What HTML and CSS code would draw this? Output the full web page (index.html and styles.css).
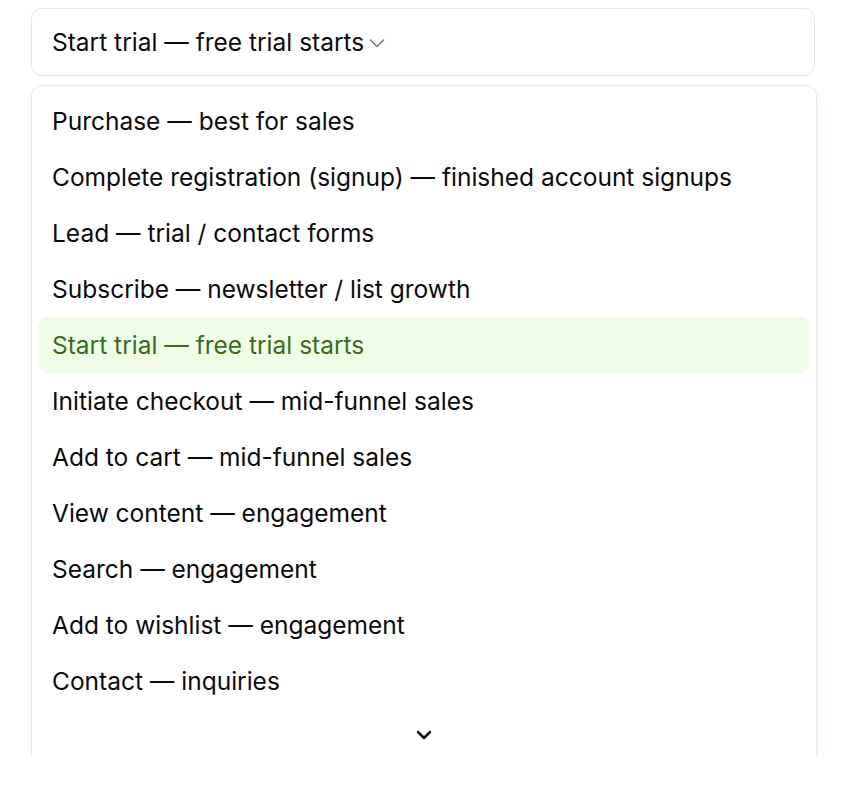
FILE: index.html
```html
<!DOCTYPE html>
<html lang="en">
<head>
    <meta charset="UTF-8">
    <meta name="viewport" content="width=device-width, initial-scale=1.0">
    <title>Event select</title>
    <link rel="stylesheet" href="styles.css">
</head>
<body>
    <div class="page">
        <button class="trigger" type="button">
            <span>Start trial — free trial starts</span>
            <svg class="trigger-icon" width="18" height="18" viewBox="0 0 18 18" fill="none">
                <path d="M2.5 6 9 12.5 15.5 6" stroke="currentColor" stroke-width="1.6" stroke-linecap="round" stroke-linejoin="round"/>
            </svg>
        </button>

        <div class="listbox" role="listbox">
            <div class="option">Purchase — best for sales</div>
            <div class="option">Complete registration (signup) — finished account signups</div>
            <div class="option">Lead — trial / contact forms</div>
            <div class="option">Subscribe — newsletter / list growth</div>
            <div class="option selected">Start trial — free trial starts</div>
            <div class="option">Initiate checkout — mid-funnel sales</div>
            <div class="option">Add to cart — mid-funnel sales</div>
            <div class="option">View content — engagement</div>
            <div class="option">Search — engagement</div>
            <div class="option">Add to wishlist — engagement</div>
            <div class="option">Contact — inquiries</div>
            <div class="scroll-down">
                <svg width="18" height="18" viewBox="0 0 18 18" fill="none">
                    <path d="M3 6l6 6 6-6" stroke="currentColor" stroke-width="2.5" stroke-linecap="round" stroke-linejoin="round"/>
                </svg>
            </div>
        </div>
    </div>
</body>
</html>
```

FILE: styles.css
```css
body {
    margin: 0;
    font-family: Inter, "Noto Sans", sans-serif;
    background-color: #fff;
    color: #0b0b0f;
}
.page {
    padding: 8px 30px 0 31px;
    height: 748px;
    overflow: hidden;
}
.trigger {
    display: flex;
    align-items: center;
    gap: 4px;
    width: 784px;
    height: 68px;
    padding: 0 20px;
    font-family: inherit;
    font-size: 24.5px;
    color: #0b0b0f;
    background: #fff;
    border: 1px solid #e6e6ef;
    border-radius: 11px;
    text-align: left;
}
.trigger-icon {
    color: #7a7a80;
    margin-top: 1px;
}
.listbox {
    margin-top: 9px;
    width: 772px;
    padding: 7px 6px 6px;
    background: #fff;
    border: 1px solid #e8e8f1;
    border-radius: 11px;
    box-shadow: 2px 4px 10px rgba(60, 60, 110, 0.06);
}
.option {
    height: 56px;
    display: flex;
    align-items: center;
    padding: 0 14px;
    font-size: 24.5px;
    border-radius: 9px;
}
.option.selected {
    background-color: #effde8;
    color: #3a6c1c;
}
.scroll-down {
    display: flex;
    justify-content: center;
    padding-top: 17px;
    height: 60px;
    color: #0b0b0f;
}
```
